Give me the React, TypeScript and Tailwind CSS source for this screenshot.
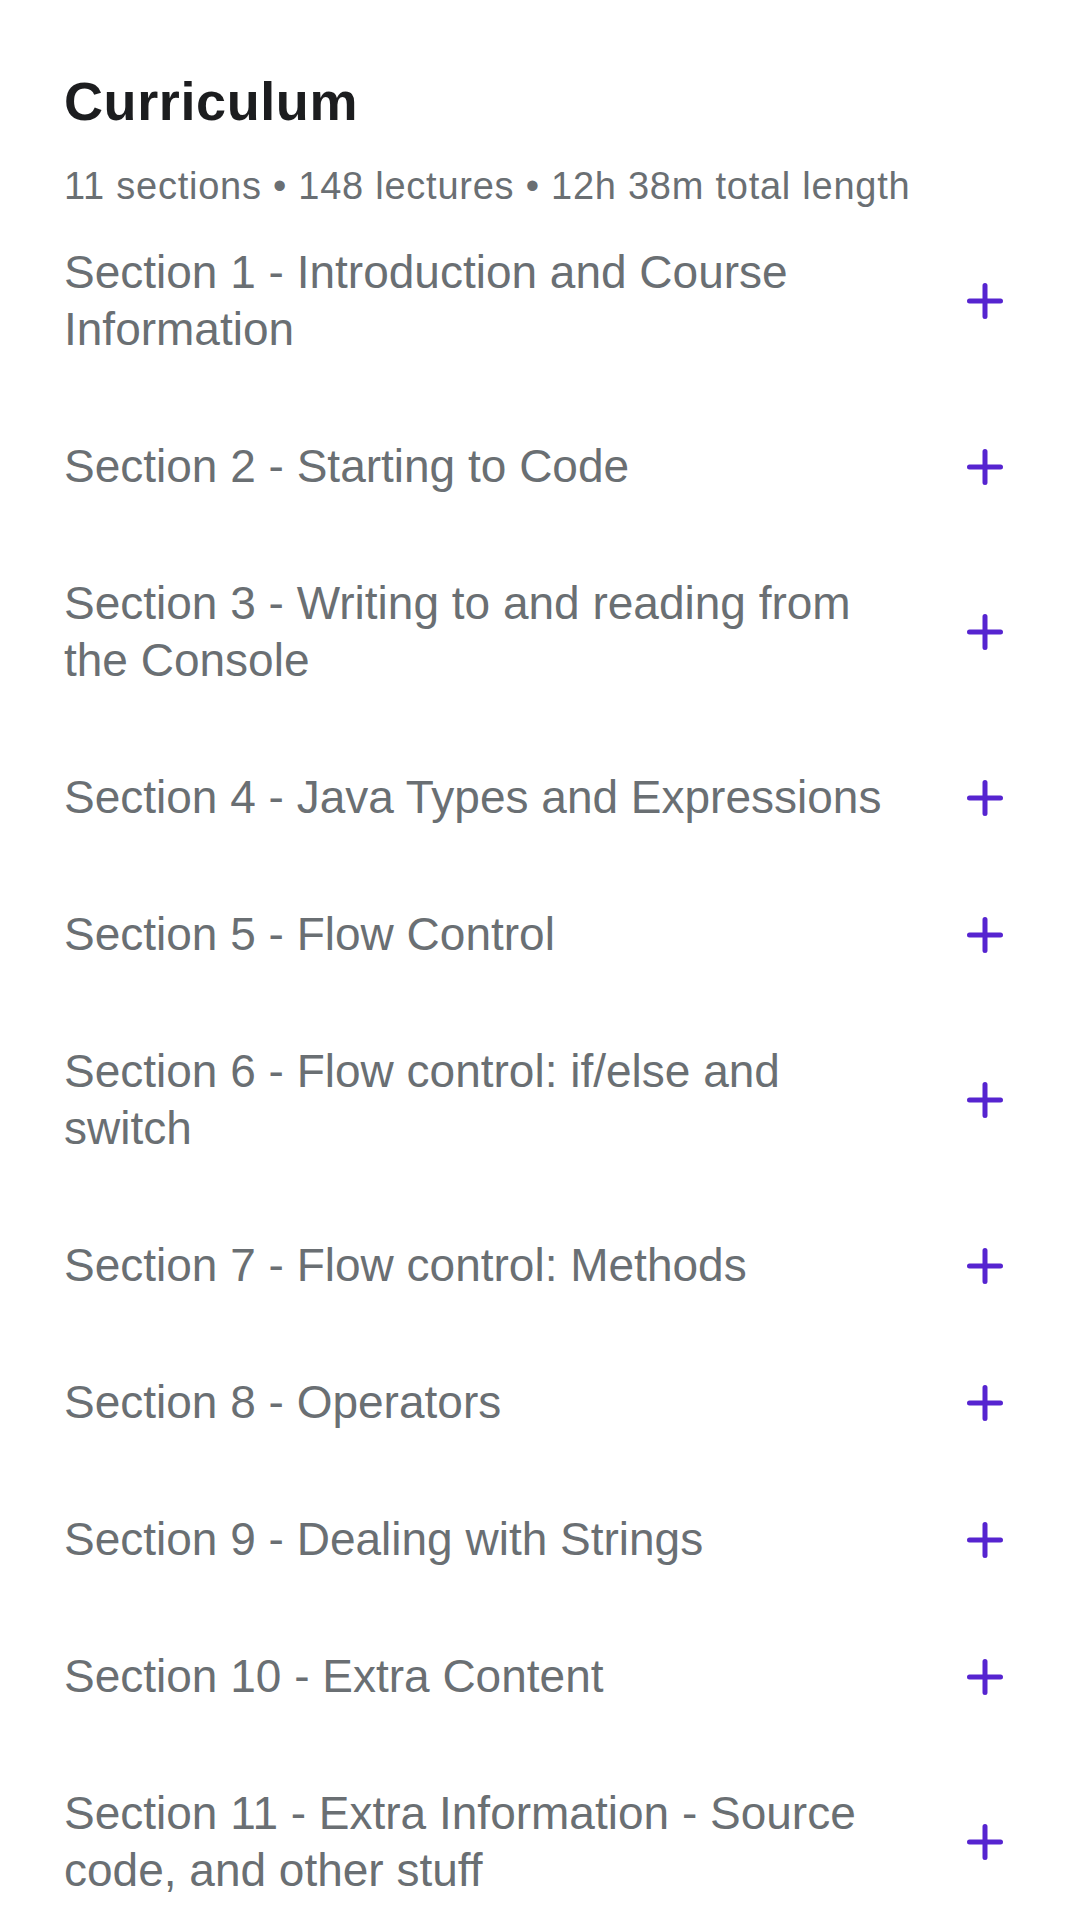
const sections = [
  'Section 1 - Introduction and Course Information',
  'Section 2 - Starting to Code',
  'Section 3 - Writing to and reading from the Console',
  'Section 4 - Java Types and Expressions',
  'Section 5 - Flow Control',
  'Section 6 - Flow control: if/else and switch',
  'Section 7 - Flow control: Methods',
  'Section 8 - Operators',
  'Section 9 - Dealing with Strings',
  'Section 10 - Extra Content',
  'Section 11 - Extra Information - Source code, and other stuff',
]

const PlusIcon = () => (
  <svg width="36" height="36" viewBox="0 0 36 36" fill="none" className="shrink-0">
    <path d="M18 2.5v31M2.5 18h31" stroke="#5624d0" strokeWidth="5" strokeLinecap="round" />
  </svg>
)

const App = () => {
  return (
    <div className="min-h-screen bg-white font-['Liberation_Sans',Arial,sans-serif]">
      <div className="pt-[71px] pl-[64px] pr-[77px]">
        {/* Header */}
        <h2 className="text-[54px] leading-[60px] tracking-[0.6px] font-bold text-[#1c1d1f]">Curriculum</h2>
        <p className="mt-[37px] text-[38px] leading-[36px] tracking-[0.75px] text-[#6a6f73]">
          11 sections • 148 lectures • 12h 38m total length
        </p>

        {/* Sections */}
        <ul>
          {sections.map((title) => (
            <li key={title} className="flex items-center gap-[48px] py-[40px]">
              <span className="flex-1 text-[46px] leading-[57px] text-[#6a6f73]">{title}</span>
              <PlusIcon />
            </li>
          ))}
        </ul>
      </div>
    </div>
  )
}

export default App
